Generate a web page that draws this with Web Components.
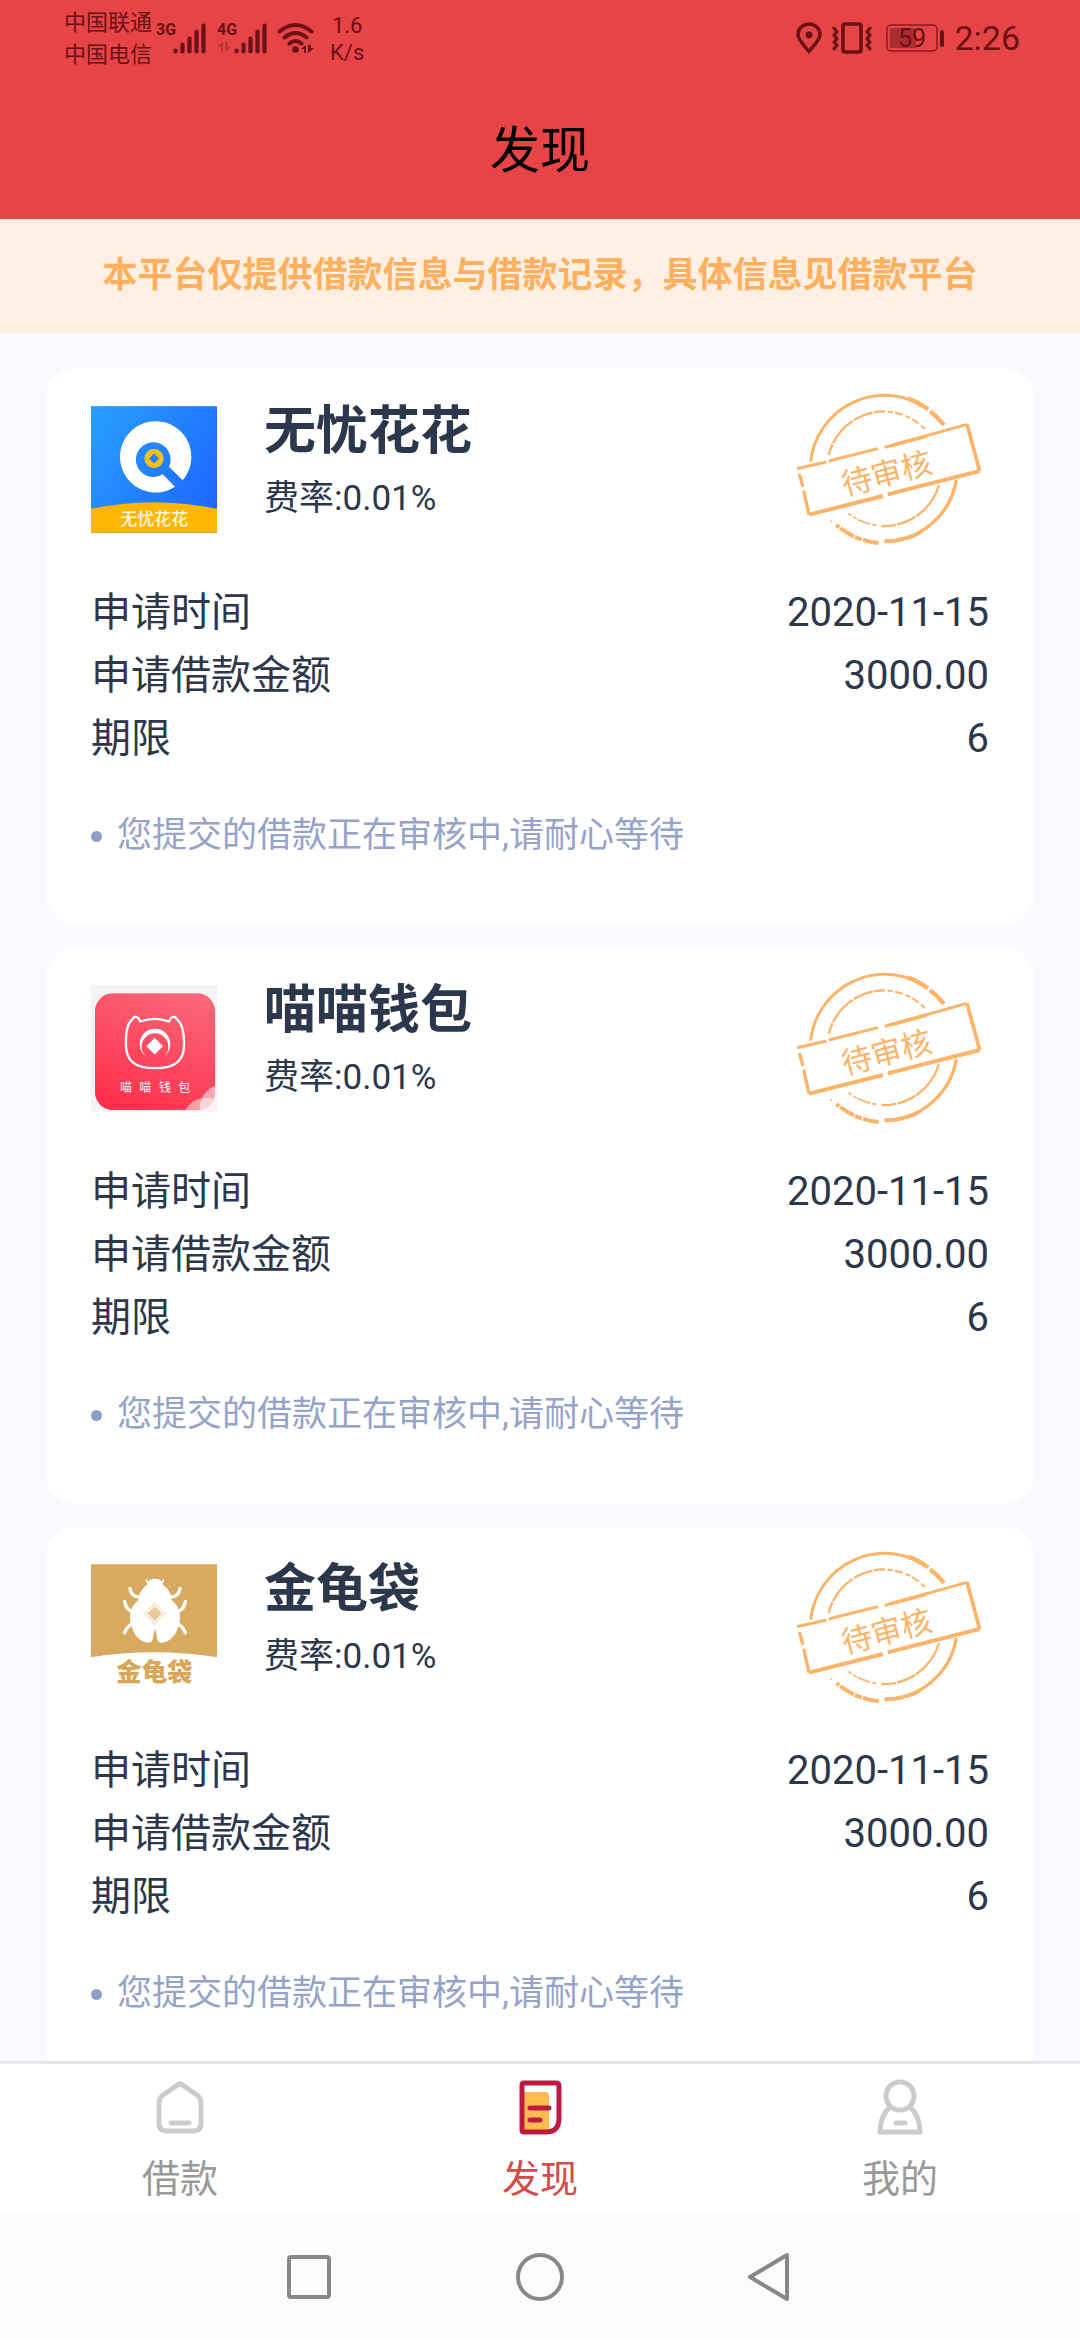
<!DOCTYPE html>
<html lang="zh-CN">
<head>
<meta charset="utf-8">
<meta name="viewport" content="width=device-width, initial-scale=1">
<title>发现</title>
<style>
  html, body {
    height: 100%;
    margin: 0;
  }
  body {
    display: flex;
    flex-direction: column;
    background: #f8faff;
    color: #2d374b;
    font-family: Roboto, 'Noto Sans CJK SC', sans-serif;
  }
  main {
    flex: 1;
    min-height: 0;
    overflow-y: auto;
    scrollbar-width: none;
  }
  .list {
    display: flex;
    flex-direction: column;
    gap: 24px;
    padding: 36px 46px;
  }
</style>
</head>
<body>
<status-bar time="2:26" battery="59"></status-bar>
<page-header>发现</page-header>
<main>
  <notice-bar>本平台仅提供借款信息与借款记录，具体信息见借款平台</notice-bar>
  <div class="list">
    <loan-card name="无忧花花" rate="0.01%" date="2020-11-15" amount="3000.00" term="6">
      <app-logo slot="logo" type="huahua"></app-logo>
      您提交的借款正在审核中,请耐心等待
    </loan-card>
    <loan-card name="喵喵钱包" rate="0.01%" date="2020-11-15" amount="3000.00" term="6">
      <app-logo slot="logo" type="miaomiao"></app-logo>
      您提交的借款正在审核中,请耐心等待
    </loan-card>
    <loan-card name="金龟袋" rate="0.01%" date="2020-11-15" amount="3000.00" term="6">
      <app-logo slot="logo" type="jingui"></app-logo>
      您提交的借款正在审核中,请耐心等待
    </loan-card>
  </div>
</main>
<tab-bar>
  <tab-item icon="home">借款</tab-item>
  <tab-item icon="find" active>发现</tab-item>
  <tab-item icon="user">我的</tab-item>
</tab-bar>
<system-nav></system-nav>

<script>
// attach an open shadow root and fill it
function render(el, html) {
  el.attachShadow({ mode: 'open' }).innerHTML = html;
}

const signal = (label, extra = '') => `
  <svg width="50" height="40" viewBox="0 -4 50 40">
    <text x="0" y="13" font-size="16" font-weight="700" fill="#6b1114">${label}</text>
    ${extra}
    <path d="M19.500 28.500v1M26.500 22.500v7M33.500 16.500v13M40.500 9.500v20M47.500 3.500v26" stroke="#6b1114" stroke-width="4.200" stroke-linecap="round"/>
  </svg>`;

class StatusBar extends HTMLElement {
  connectedCallback() {
    render(this, `
<style>
  :host {
    display: flex;
    justify-content: space-between;
    align-items: flex-start;
    padding: 6px 60px 10px 64px;
    background: #e64447;
    color: #6b1114;
  }
  .group {
    display: flex;
    align-items: center;
    height: 64px;
  }
  .carriers {
    font-size: 22px;
    line-height: 32px;
    margin-right: 4px;
    padding-top: 2px;
  }
  .speed {
    font-size: 22px;
    line-height: 27px;
    text-align: center;
    margin-left: 15px;
    padding-top: 2px;
  }
  .left svg + svg { margin-left: 11px; }
  .left svg + .wifi { margin-left: 10px; }
  .right { gap: 10px; }
  .time { font-size: 34px; }
  .battery { margin-left: 4px; }
</style>
<div class="group left">
  <div class="carriers"><div>中国联通</div><div>中国电信</div></div>
  ${signal('3G')}
  ${signal('4G', '<path d="M6 20v10H4v-5H0zM8 20v10l6-5h-3v-5z" fill="#c13338"/>')}
  <svg class="wifi" width="38" height="32" viewBox="0 0 38 32" fill="none" stroke="#6b1114" stroke-width="4" stroke-linecap="round">
    <path d="M2.500 9.500Q18.500-3.500 34.500 9.500M7.500 15.500Q18.500 6.500 29.500 15.500M12.500 21.500Q18.500 16.500 24.500 21.500"/>
    <circle cx="18.500" cy="27.500" r="3.300" fill="#6b1114" stroke="none"/>
    <path d="M29 23v8h-2v-4h-3zM31 23v8l6-5h-3v-3z" fill="#6b1114" stroke="none"/>
  </svg>
  <div class="speed"><div>1.6</div><div>K/s</div></div>
</div>
<div class="group right">
  <svg width="26" height="32" viewBox="0 0 26 32" fill="none" stroke="#6b1114" stroke-width="3.500">
    <path d="M13 29.500C8 23 2 18 2 12.500a11 10.500 0 0 1 22 0C24 18 18 23 13 29.500Z"/>
    <circle cx="13" cy="13" r="3.400" fill="#6b1114" stroke="none"/>
  </svg>
  <svg width="40" height="32" viewBox="0 0 40 32" fill="none" stroke="#6b1114" stroke-width="3.500" stroke-linejoin="round" stroke-linecap="round">
    <rect x="11" y="2" width="18" height="28" rx="2"/>
    <path d="M2 6l3 4-3 3 3 4-3 3 3 3-3 4M38 6l-3 4 3 3-3 4 3 3-3 3 3 4" stroke-width="3"/>
  </svg>
  <svg class="battery" width="58" height="28" viewBox="0 0 58 28">
    <rect x="1" y="1" width="50" height="26" rx="4" fill="none" stroke="#8c1d21" stroke-width="1.500"/>
    <rect x="4" y="4" width="26" height="20" fill="#a92d31"/>
    <rect x="54" y="6" width="4" height="17" rx="2" fill="#6b1114"/>
    <text x="26" y="23" text-anchor="middle" font-size="25" fill="#6b1114">${this.getAttribute('battery')}</text>
  </svg>
  <div class="time">${this.getAttribute('time')}</div>
</div>`);
  }
}
customElements.define('status-bar', StatusBar);

class PageHeader extends HTMLElement {
  connectedCallback() {
    render(this, `
<style>
  :host {
    display: block;
    padding-top: 4px;
    background: #e64447;
    color: #000;
  }
  h1 {
    margin: 0;
    font-size: 50px;
    font-weight: 400;
    line-height: 135px;
    text-align: center;
  }
</style>
<h1><slot></slot></h1>`);
  }
}
customElements.define('page-header', PageHeader);

class NoticeBar extends HTMLElement {
  connectedCallback() {
    render(this, `
<style>
  :host {
    display: block;
    padding: 32px 20px;
    background: #fff0e3;
    color: #feb05f;
    font-size: 35px;
    font-weight: 700;
    line-height: 50px;
    text-align: center;
  }
</style>
<slot></slot>`);
  }
}
customElements.define('notice-bar', NoticeBar);

const logos = {
  huahua: `
    <defs><linearGradient id="bg" x1="0" y1="0.200" x2="1" y2="0.800">
      <stop offset="0" stop-color="#279bff"/><stop offset="1" stop-color="#1d66ff"/>
    </linearGradient></defs>
    <rect width="378" height="380" fill="url(#bg)"/>
    <path d="M275 222A107 107 0 1 0 252 242L215 204A52 52 0 1 1 234 182Z" fill="#fff"/>
    <circle cx="189" cy="157" r="29" fill="#f0c020"/>
    <path d="M189 142l15 15-15 15-15-15Z" fill="#2b7fe8"/>
    <path d="M0 308Q189 268 378 308V380H0Z" fill="#ffb600"/>
    <text x="190" y="356" text-anchor="middle" font-size="51" font-weight="500" fill="#fffbe0">无忧花花</text>`,
  miaomiao: `
    <defs>
      <linearGradient id="bg" x1="0.700" y1="0" x2="0.300" y2="1">
        <stop offset="0" stop-color="#fa6577"/><stop offset="1" stop-color="#fe304b"/>
      </linearGradient>
      <clipPath id="tile"><rect x="12" y="24" width="360" height="351" rx="54"/></clipPath>
    </defs>
    <rect width="378" height="380" fill="#f4f4f4"/>
    <g clip-path="url(#tile)">
      <rect x="12" y="24" width="360" height="351" fill="url(#bg)"/>
      <circle cx="345" cy="408" r="70" fill="#fff" opacity="0.500"/>
      <circle cx="400" cy="370" r="74" fill="#fff" opacity="0.550"/>
    </g>
    <g fill="none" stroke="#fff" stroke-width="7" stroke-linejoin="round">
      <path d="M105 172C104 140 110 116 122 104C130 92 140 90 148 109C175 99 207 99 234 109C242 90 252 92 260 104C274 117 279 142 279 172C282 230 248 249 192 249C136 249 102 230 105 172Z"/>
    </g>
    <path d="M165 214A46 46 0 1 1 219 214A40 40 0 1 0 165 214Z" fill="#fff"/>
    <path d="M191 158l25 25-25 25-25-25Z" fill="#fff"/>
    <text x="87 145 204 262" y="322" font-size="36" fill="#fff">喵喵钱包</text>`,
  jingui: `
    <rect width="378" height="380" fill="#fff"/>
    <path d="M0 0H378V279Q189 249 0 279Z" fill="#d8a961"/>
    <g fill="none" stroke="#fff" stroke-width="10" stroke-linecap="round">
      <path d="M117 73C119 88 128 96 140 98M101 112C103 128 112 138 124 143M122 180C112 186 105 194 101 206"/>
      <path d="M267 73C265 88 256 96 244 98M283 112C281 128 272 138 260 143M262 180C272 186 279 194 283 206"/>
      <path d="M176 56Q166 56 167 48M208 56Q218 56 217 48" stroke-width="5"/>
    </g>
    <path d="M192 44C177 44 170 52 168 62C150 76 142 92 142 108C124 122 117 140 117 160C119 200 140 232 172 236C183 236 186 228 187 212L192 194L197 212C198 228 201 236 212 236C244 232 265 200 267 160C267 140 260 122 242 108C242 92 234 76 216 62C214 52 207 44 192 44Z" fill="#fff"/>
    <path d="M191 112l37 36-37 36-37-36Z" fill="#f8eee0"/>
    <path d="M191 127l21 21-21 21-21-21Z" fill="#e8c99c"/>
    <text x="190" y="350" text-anchor="middle" font-size="76" font-weight="900" fill="#d8a559">金龟袋</text>`
};

class AppLogo extends HTMLElement {
  connectedCallback() {
    render(this, `
<style>
  :host { display: block; }
  svg { display: block; width: 126px; height: 127px; }
</style>
<svg viewBox="0 0 378 380">${logos[this.getAttribute('type')]}</svg>`);
  }
}
customElements.define('app-logo', AppLogo);

// worn rubber stamp, the strokes are broken on purpose
class ReviewStamp extends HTMLElement {
  connectedCallback() {
    render(this, `
<style>
  :host { display: block; }
  svg { display: block; width: 190px; height: 160px; }
</style>
<svg viewBox="100 60 570 480" fill="none" stroke="#fbb469" stroke-width="9">
  <defs><filter id="rough">
    <feTurbulence type="fractalNoise" baseFrequency="0.150" numOctaves="2" seed="4"/>
    <feDisplacementMap in="SourceGraphic" scale="3"/>
  </filter></defs>
  <g filter="url(#rough)">
    <path d="M153 275A223 223 0 0 1 505 118"/>
    <path d="M445 86A223 223 0 0 1 505 118M511 124A223 223 0 0 1 553 165" stroke-width="13"/>
    <path d="M207 255A172 172 0 0 1 378 124" stroke-width="7" stroke-dasharray="34 4 90 5 60 3"/>
    <path d="M384 125A172 172 0 0 1 500 182" stroke-width="6" stroke-dasharray="16 6 24 9"/>
    <path d="M590 330A220 220 0 0 1 375 514" stroke-width="10"/>
    <path d="M480 488A220 220 0 0 1 375 514M357 519A223 223 0 0 1 230 465" stroke-width="12" stroke-dasharray="48 4 22 3"/>
    <path d="M213 452l4 3" stroke-width="5"/>
    <path d="M538 345A172 172 0 0 1 365 468" stroke-width="7" stroke-dasharray="118 3 60 3"/>
    <path d="M350 466A172 172 0 0 1 266 430" stroke-width="5" stroke-dasharray="12 6 40 4"/>
    <path d="M112 296L200 276M207 273L355 236M375 232L622 163" stroke-width="9"/>
    <path d="M390 228L500 199M622 163L660 303" stroke-width="11"/>
    <path d="M660 303L384 373M370 378L148 434" stroke-width="12"/>
    <path d="M148 434L132 362M130 350L119 312" stroke-width="10"/>
  </g>
  <text transform="translate(256 378) rotate(-15)" font-size="92" font-weight="400" fill="#fbb469" stroke="none">待审核</text>
</svg>`);
  }
}
customElements.define('review-stamp', ReviewStamp);

class LoanCard extends HTMLElement {
  connectedCallback() {
    const get = key => this.getAttribute(key);
    render(this, `
<style>
  :host {
    display: block;
    padding: 21px 45px 64px;
    background: #fff;
    border-radius: 30px;
  }
  .head {
    display: flex;
    align-items: flex-start;
    margin-bottom: 31px;
  }
  .logo { padding-top: 16px; }
  .info {
    flex: 1;
    padding: 12px 0 0 47px;
  }
  h2 {
    margin: 0 0 12px;
    font-size: 52px;
    font-weight: 700;
    line-height: 60px;
  }
  .rate {
    font-size: 35px;
    line-height: 50px;
  }
  review-stamp { margin-right: 6px; }
  dl {
    margin: 0 0 42px;
    font-size: 40px;
    line-height: 63px;
  }
  dl div {
    display: flex;
    justify-content: space-between;
  }
  dd { margin: 0; }
  .tip {
    display: flex;
    align-items: center;
    gap: 15px;
    color: #96a3c9;
    font-size: 35px;
    line-height: 48px;
  }
  .tip::before {
    content: '';
    width: 11px;
    height: 11px;
    border-radius: 50%;
    background: #8f9dca;
  }
</style>
<div class="head">
  <div class="logo"><slot name="logo"></slot></div>
  <div class="info">
    <h2>${get('name')}</h2>
    <div class="rate">费率:${get('rate')}</div>
  </div>
  <review-stamp></review-stamp>
</div>
<dl>
  <div><dt>申请时间</dt><dd>${get('date')}</dd></div>
  <div><dt>申请借款金额</dt><dd>${get('amount')}</dd></div>
  <div><dt>期限</dt><dd>${get('term')}</dd></div>
</dl>
<div class="tip"><span><slot></slot></span></div>`);
  }
}
customElements.define('loan-card', LoanCard);

class TabBar extends HTMLElement {
  connectedCallback() {
    render(this, `
<style>
  :host { display: block; }
  nav {
    display: flex;
    border-top: 3px solid #e6e6e6;
    background: #fff;
  }
  ::slotted(*) { flex: 1; }
</style>
<nav><slot></slot></nav>`);
  }
}
customElements.define('tab-bar', TabBar);

const tabIcons = {
  home: `<g stroke="#ccc">
    <path d="M26 8Q30 4 34 8L47 17Q51 20 51 26V45Q51 53 43 53H17Q9 53 9 45V26Q9 20 13 17Z"/><path d="M21 45H39"/></g>`,
  find: `<path d="M13 14H36Q39 14 39 18V52H13Z" fill="#fdbb50"/>
    <g stroke="#bd1a42"><path d="M14 5H46Q49 5 49 8V40Q49 54 36 54H14Q12 54 12 52V7Q12 5 14 5Z"/><path d="M20 30H39M20 42H30"/></g>`,
  user: `<g stroke="#ccc"><circle cx="30" cy="18" r="14"/><path d="M20 29Q10 38 10 54H50Q50 38 40 29"/><path d="M26 45H35"/></g>`
};

class TabItem extends HTMLElement {
  connectedCallback() {
    render(this, `
<style>
  :host { display: block; color: #999; }
  :host([active]) { color: #d54a4a; }
  a {
    display: flex;
    flex-direction: column;
    align-items: center;
    padding: 14px 0 8px;
    color: inherit;
    text-decoration: none;
    font-size: 38px;
    line-height: 54px;
  }
  svg { display: block; width: 60px; height: 60px; margin-bottom: 14px; }
</style>
<a href="#${this.getAttribute('icon')}">
  <svg viewBox="0 0 60 60" fill="none" stroke-width="5" stroke-linecap="round" stroke-linejoin="round">${tabIcons[this.getAttribute('icon')]}</svg>
  <span><slot></slot></span>
</a>`);
  }
}
customElements.define('tab-item', TabItem);

class SystemNav extends HTMLElement {
  connectedCallback() {
    render(this, `
<style>
  :host {
    display: flex;
    justify-content: center;
    gap: 171px;
    padding: 33px 0;
    background: #fcfcfc;
  }
  button {
    padding: 0;
    border: none;
    background: none;
  }
  svg { display: block; width: 60px; height: 60px; }
</style>
<button aria-label="最近任务"><svg viewBox="0 0 60 60" fill="none" stroke="#888" stroke-width="4"><rect x="10" y="10" width="40" height="40" rx="2"/></svg></button>
<button aria-label="主页"><svg viewBox="0 0 60 60" fill="none" stroke="#888" stroke-width="4"><circle cx="30" cy="30" r="22"/></svg></button>
<button aria-label="返回"><svg viewBox="0 0 60 60" fill="none" stroke="#888" stroke-width="4" stroke-linejoin="round"><path d="M9 30L46 8V52Z"/></svg></button>`);
  }
}
customElements.define('system-nav', SystemNav);
</script>
</body>
</html>
